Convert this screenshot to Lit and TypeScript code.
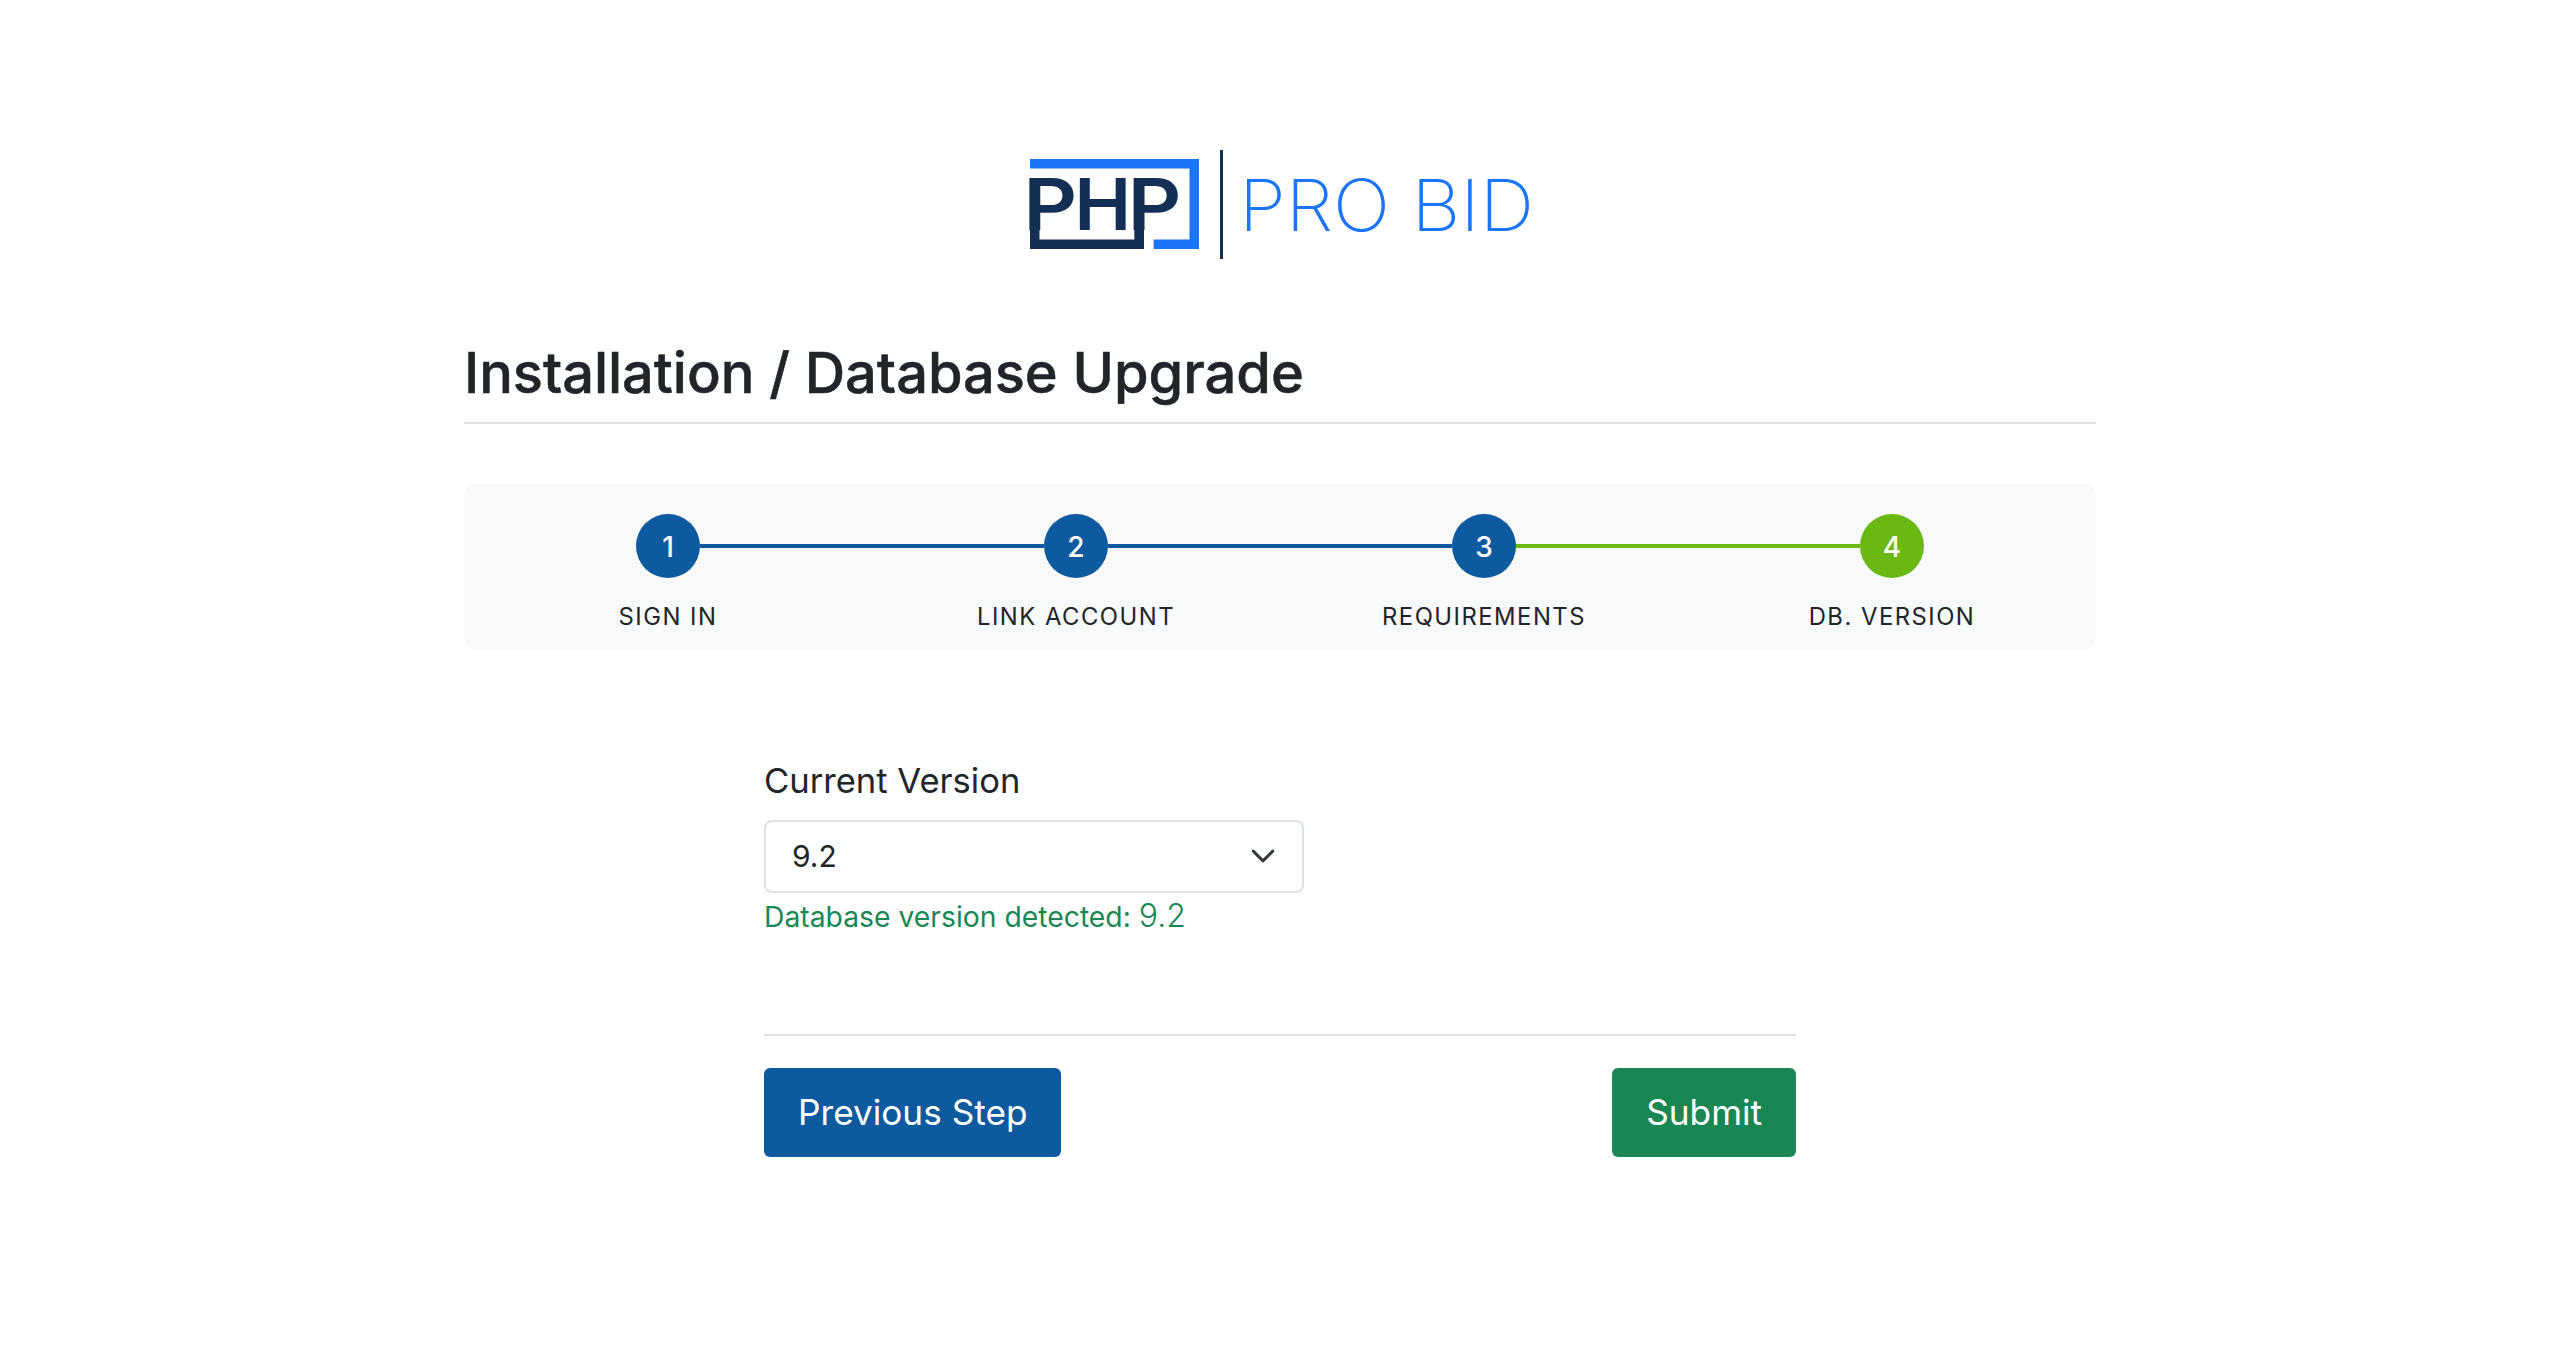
import { LitElement, html, css } from "lit";
import { customElement } from "lit/decorators.js";

const steps = [
  { n: "1", label: "SIGN IN", l: "", r: "blue", c: "blue" },
  { n: "2", label: "LINK ACCOUNT", l: "blue", r: "blue", c: "blue" },
  { n: "3", label: "REQUIREMENTS", l: "blue", r: "green", c: "blue" },
  { n: "4", label: "DB. VERSION", l: "green", r: "", c: "green" },
];

@customElement("app-root")
export class AppRoot extends LitElement {
  static styles = css`
    :host {
      display: block;
      height: 1370px;
      background: #fff;
      color: #212529;
      font-family: Inter, "Liberation Sans", sans-serif;
    }
    .page { width: 1632px; margin: 0 auto; padding-top: 150px; }
    .logo { display: block; width: 530px; height: 110px; margin: 0 auto; }
    .logo .php { font-family: Inter, sans-serif; font-weight: 600; font-size: 72px; fill: #132f56; }
    .logo .pro { font-family: Inter, sans-serif; font-weight: 200; font-size: 72px; fill: #1a75f8; }
    .title-wrap { margin-top: 80px; padding-bottom: 15px; border-bottom: 2px solid #dee2e6; }
    h1 { margin: 0; font-size: 56px; line-height: 67px; font-weight: 500; letter-spacing: -0.05px; -webkit-text-stroke: 0.5px #212529; }
    .panel {
      margin-top: 60px; height: 165px; box-sizing: border-box; padding-top: 30px;
      background: #f8f9fa; border-radius: 12px;
      display: grid; grid-template-columns: repeat(4, 1fr);
    }
    .step { display: flex; flex-direction: column; align-items: stretch; }
    .track { display: flex; align-items: center; }
    .seg { flex: 1; height: 4px; }
    .seg.blue { background: #0d5a9e; }
    .seg.green { background: #6cb812; }
    .dot {
      width: 64px; height: 64px; box-sizing: border-box; padding-top: 2px; border-radius: 50%; color: #fff;
      display: flex; align-items: center; justify-content: center;
      font-size: 28px; font-weight: 500;
    }
    .dot.blue { background: #0d5a9e; }
    .dot.green { background: #6cb812; }
    .label { margin-top: 24px; text-align: center; font-size: 23.8px; line-height: 30px; letter-spacing: 1.5px; }
    .form { width: 1032px; margin: 105px auto 0; }
    .field-label { font-size: 34.6px; line-height: 52.5px; }
    .select {
      margin-top: 13px; width: 540px; height: 73px; box-sizing: border-box;
      border: 2.5px solid #dee2e6; border-radius: 8px; background: #fff;
      display: flex; align-items: center; justify-content: space-between;
      padding: 0 26.5px 0 26px; font-size: 30px;
    }
    .select svg { width: 26px; height: 26px; display: block; }
    .help { margin-top: 2px; font-size: 28.3px; line-height: 42px; color: #198754; }
    .help .ver { font-size: 32px; font-weight: 300; }
    .actions {
      margin-top: 96px; border-top: 2px solid #dee2e6; padding-top: 32px;
      display: flex; justify-content: space-between;
    }
    .btn {
      height: 89px; padding: 0 34px; border: 0; border-radius: 6px; color: #fff;
      font: 400 35.2px Inter, sans-serif; display: flex; align-items: center;
    }
    .btn.prev { background: #0d5a9e; }
    .btn.submit { background: #198754; }
  `;

  render() {
    return html`
      <div class="page">
        <svg class="logo" viewBox="-10 0 530 110" aria-label="PHP PRO BID logo">
          <path d="M5 9H174V99H128.6V89.5H164.5V18.5H5Z" fill="#1a75f8"/>
          <path d="M5 28H14.5V89.5H109.3V28H119V99H5Z" fill="#132f56"/>
          <text class="php" x="-1.8" y="80" textLength="54" lengthAdjust="spacingAndGlyphs">P</text>
          <text class="php" x="49.2" y="80" textLength="57" lengthAdjust="spacingAndGlyphs">H</text>
          <text class="php" x="102.5" y="80" textLength="54" lengthAdjust="spacingAndGlyphs">P</text>
          <rect x="195" y="0" width="3" height="109" fill="#132f56"/>
          <text class="pro" x="214" y="81" textLength="295" lengthAdjust="spacingAndGlyphs">PRO BID</text>
        </svg>
        <div class="title-wrap"><h1>Installation / Database Upgrade</h1></div>
        <div class="panel">
          ${steps.map(
            (s) => html`
              <div class="step">
                <div class="track">
                  <div class="seg ${s.l}"></div>
                  <div class="dot ${s.c}">${s.n}</div>
                  <div class="seg ${s.r}"></div>
                </div>
                <div class="label">${s.label}</div>
              </div>
            `
          )}
        </div>
        <div class="form">
          <div class="field-label">Current Version</div>
          <div class="select" role="combobox" aria-expanded="false">
            <span>9.2</span>
            <svg viewBox="0 0 16 16"><path d="M2 5l6 6 6-6" fill="none" stroke="#343a40" stroke-width="1.8" stroke-linecap="round" stroke-linejoin="round"/></svg>
          </div>
          <div class="help">Database version detected: <span class="ver">9.2</span></div>
          <div class="actions">
            <button class="btn prev">Previous Step</button>
            <button class="btn submit">Submit</button>
          </div>
        </div>
      </div>
    `;
  }
}
